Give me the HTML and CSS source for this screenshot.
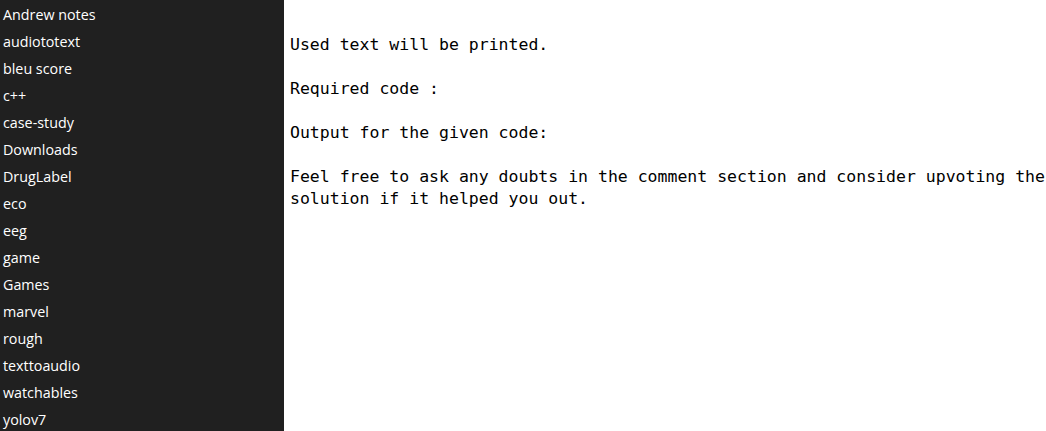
FILE: index.html
```html
<!DOCTYPE html>
<html>
<head>
<meta charset="utf-8">
<link rel="stylesheet" href="styles.css">
</head>
<body>
<div class="app">
  <nav class="sidebar">
    <div class="item">Andrew notes</div>
    <div class="item">audiototext</div>
    <div class="item">bleu score</div>
    <div class="item">c++</div>
    <div class="item">case-study</div>
    <div class="item">Downloads</div>
    <div class="item">DrugLabel</div>
    <div class="item">eco</div>
    <div class="item">eeg</div>
    <div class="item">game</div>
    <div class="item">Games</div>
    <div class="item">marvel</div>
    <div class="item">rough</div>
    <div class="item">texttoaudio</div>
    <div class="item">watchables</div>
    <div class="item">yolov7</div>
  </nav>
  <main class="content">
    <p class="para">Used text will be printed.</p>
    <p class="para">Required code :</p>
    <p class="para">Output for the given code:</p>
    <p class="para">Feel free to ask any doubts in the comment section and consider upvoting the solution if it helped you out.</p>
  </main>
</div>
</body>
</html>
```
FILE: styles.css
```css
html, body {
  margin: 0;
  padding: 0;
  height: 100%;
  overflow: hidden;
  background: #ffffff;
}
.app {
  display: flex;
  height: 431px;
}
.sidebar {
  width: 284px;
  flex: none;
  background: #202020;
  color: #ffffff;
  font-family: "Open Sans", "Noto Sans", sans-serif;
  font-size: 14.3px;
  padding: 1px 0 0 3px;
  box-sizing: border-box;
}
.item {
  height: 27px;
  line-height: 27px;
  white-space: nowrap;
}
.content {
  flex: 1;
  padding: 34px 0 0 6px;
  font-family: "DejaVu Sans Mono", monospace;
  font-size: 16.5px;
  line-height: 22px;
  color: #000000;
}
.para {
  margin: 0 0 22px 0;
}
```
